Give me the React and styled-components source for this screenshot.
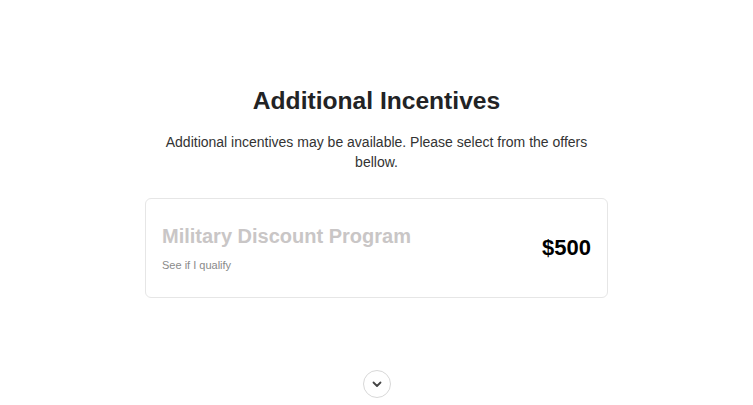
import styled, { createGlobalStyle } from "styled-components";

const GlobalStyle = createGlobalStyle`
  body {
    margin: 0;
    background: #fff;
    font-family: "Liberation Sans", Arial, sans-serif;
  }
`;

const Page = styled.div`
  display: flex;
  flex-direction: column;
  align-items: center;
  padding-top: 85px;
`;

const Title = styled.h2`
  margin: 0;
  font-size: 24.6px;
  font-weight: 700;
  color: #222325;
  line-height: 32px;
`;

const Subtitle = styled.p`
  margin: 15px 0 0;
  width: 440px;
  text-align: center;
  font-size: 14px;
  line-height: 20px;
  color: #333;
`;

const Card = styled.div`
  margin-top: 26px;
  width: 463px;
  height: 100px;
  box-sizing: border-box;
  border: 1px solid #e6e6e6;
  border-radius: 6px;
  display: flex;
  align-items: center;
  justify-content: space-between;
  padding: 0 16px;
`;

const Info = styled.div`
  display: flex;
  flex-direction: column;
  gap: 11px;
  margin-top: -1px;
`;

const OfferName = styled.div`
  font-size: 20px;
  font-weight: 700;
  color: #c9c6c6;
`;

const Qualify = styled.div`
  font-size: 11px;
  color: #8a8a8a;
`;

const Amount = styled.div`
  font-size: 22px;
  font-weight: 700;
  color: #000;
`;

const ScrollButton = styled.button`
  margin-top: 72px;
  width: 28px;
  height: 28px;
  border-radius: 50%;
  border: 1px solid #d8d8d8;
  background: #fff;
  display: flex;
  align-items: center;
  justify-content: center;
  padding: 0;
`;

export default function App() {
  return (
    <>
      <GlobalStyle />
      <Page>
        <Title>Additional Incentives</Title>
        <Subtitle>
          Additional incentives may be available. Please select from the offers
          bellow.
        </Subtitle>
        <Card>
          <Info>
            <OfferName>Military Discount Program</OfferName>
            <Qualify>See if I qualify</Qualify>
          </Info>
          <Amount>$500</Amount>
        </Card>
        <ScrollButton aria-label="Scroll down">
          <svg width="12" height="12" viewBox="0 0 12 12">
            <path
              d="M2.5 4.5 L6 8 L9.5 4.5"
              fill="none"
              stroke="#444"
              strokeWidth="1.8"
              strokeLinecap="round"
              strokeLinejoin="round"
            />
          </svg>
        </ScrollButton>
      </Page>
    </>
  );
}
